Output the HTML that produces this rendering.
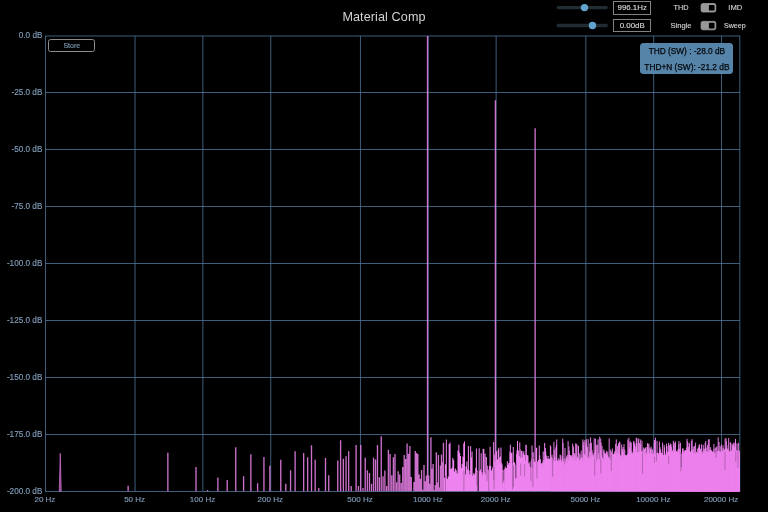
<!DOCTYPE html>
<html><head><meta charset="utf-8"><title>Material Comp</title>
<style>
html,body{margin:0;padding:0;background:#000;}
body{width:768px;height:512px;position:relative;overflow:hidden;font-family:"Liberation Sans",sans-serif;color:#c8c8c8;}
svg{position:absolute;left:0;top:0;}
.title{position:absolute;left:284px;width:200px;top:9px;text-align:center;font-size:12.6px;letter-spacing:0.1px;color:#d2d2d2;line-height:16px;}
.xl{position:absolute;width:60px;text-align:center;top:494px;font-size:8px;line-height:11px;color:#809cb9;white-space:nowrap;-webkit-text-stroke:0.15px #809cb9;}
.yl{position:absolute;left:0;width:42.4px;text-align:right;font-size:8.2px;line-height:11px;color:#809cb9;white-space:nowrap;-webkit-text-stroke:0.15px #809cb9;}
.store{position:absolute;left:48.3px;top:38.8px;width:45px;height:11px;border:1px solid #8c8c8c;border-radius:2.5px;box-sizing:content-box;font-size:7px;line-height:12px;text-align:center;color:#809cb9;-webkit-text-stroke:0.12px #809cb9;}
.tb{position:absolute;left:613px;width:36.4px;height:11.7px;border:1px solid #828282;font-size:7.9px;line-height:12.8px;text-align:center;color:#d6d6d6;-webkit-text-stroke:0.15px #d6d6d6;}
.lab{position:absolute;width:40px;text-align:center;font-size:7.6px;line-height:10px;color:#d0d0d0;-webkit-text-stroke:0.15px #d0d0d0;}
.info{position:absolute;left:640.3px;top:43.3px;width:93.2px;height:31px;border-radius:3.5px;background:rgba(90,136,175,0.96);color:#04070a;font-size:8.3px;text-align:center;-webkit-text-stroke:0.25px #04070a;}
.info div{position:absolute;left:0;width:100%;line-height:10px;white-space:nowrap;}
</style></head><body>
<svg width="768" height="512" viewBox="0 0 768 512">
<path d="M135.04 36V491.5M202.89 36V491.5M270.74 36V491.5M360.44 36V491.5M428.29 36V491.5M496.14 36V491.5M585.84 36V491.5M653.69 36V491.5M721.54 36V491.5M45.5 92.50H739.8M45.5 149.50H739.8M45.5 206.50H739.8M45.5 263.50H739.8M45.5 320.50H739.8M45.5 377.50H739.8M45.5 434.50H739.8M45 36H740.3M45 491.5H740.3M45.5 36V491.5M739.8 36V491.5" stroke="rgb(76,116,152)" stroke-opacity="0.8" stroke-width="1" fill="none"/>
<path d="M444.41 491.2V477.8M445.38 491.2V464.3M446.33 491.2V439.6M447.28 491.2V478.7M448.22 491.2V476.5M449.15 491.2V444.1M450.07 491.2V442.5M450.98 491.2V469.0M451.88 491.2V467.7M452.77 491.2V458.0M453.66 491.2V459.8M454.54 491.2V471.4M455.41 491.2V468.5M456.27 491.2V470.3M457.13 491.2V473.2M457.98 491.2V450.5M458.82 491.2V444.8M459.65 491.2V452.8M460.48 491.2V455.9M461.30 491.2V468.1M462.11 491.2V463.9M462.92 491.2V456.7M463.72 491.2V443.6M464.51 491.2V441.4M465.30 491.2V474.5M466.08 491.2V466.4M466.85 491.2V461.4M467.62 491.2V469.6M468.38 491.2V446.0M469.14 491.2V470.6M469.89 491.2V474.4M470.63 491.2V446.3M471.37 491.2V457.6M472.11 491.2V451.5M472.84 491.2V475.8M473.56 491.2V473.5M474.28 491.2V475.1M474.99 491.2V472.9M475.70 491.2V467.7M476.40 491.2V448.5M477.10 491.2V470.2M477.79 491.2V491.2M478.47 491.2V491.2M479.16 491.2V448.2M479.84 491.2V471.3M480.51 491.2V469.6M481.18 491.2V453.3M481.84 491.2V472.3M482.50 491.2V475.2M483.16 491.2V448.8M483.81 491.2V448.9M484.45 491.2V472.4M485.10 491.2V453.6M485.73 491.2V474.5M486.37 491.2V457.1M487.00 491.2V468.8M487.62 491.2V465.8M488.25 491.2V470.4M488.86 491.2V469.6M489.48 491.2V465.9M490.09 491.2V446.8M490.69 491.2V465.8M491.30 491.2V470.6M491.90 491.2V470.4M492.49 491.2V468.2M493.08 491.2V466.4M493.67 491.2V442.0M494.26 491.2V454.5M494.84 491.2V461.3M495.99 491.2V465.4M496.56 491.2V451.3M497.13 491.2V459.5M497.69 491.2V459.6M498.26 491.2V449.5M498.81 491.2V447.8M499.37 491.2V463.9M499.92 491.2V457.5M500.47 491.2V456.2M501.02 491.2V447.4M501.56 491.2V463.1M502.10 491.2V464.4M502.63 491.2V488.0M503.17 491.2V470.5M503.70 491.2V469.8M504.23 491.2V491.2M504.75 491.2V468.7M505.28 491.2V466.4M505.79 491.2V490.7M506.31 491.2V468.3M506.83 491.2V468.0M507.34 491.2V461.2M507.85 491.2V464.8M508.35 491.2V478.1M508.86 491.2V463.1M509.36 491.2V479.1M509.86 491.2V451.7M510.35 491.2V444.8M510.85 491.2V458.5M511.34 491.2V453.2M511.82 491.2V452.6M512.31 491.2V466.0M512.79 491.2V463.3M513.28 491.2V446.9M513.75 491.2V462.1M514.23 491.2V462.4M514.71 491.2V462.5M515.18 491.2V464.8M515.65 491.2V478.1M516.12 491.2V479.1M516.58 491.2V454.1M517.04 491.2V450.1M517.50 491.2V441.0M517.96 491.2V463.6M518.42 491.2V450.5M518.87 491.2V457.6M519.33 491.2V456.3M519.78 491.2V442.5M520.23 491.2V449.3M520.67 491.2V490.5M521.12 491.2V457.9M521.56 491.2V451.1M522.00 491.2V450.8M522.44 491.2V466.3M522.87 491.2V457.2M523.31 491.2V453.5M523.74 491.2V451.3M524.17 491.2V465.4M524.60 491.2V454.7M525.03 491.2V460.4M525.45 491.2V481.0M525.87 491.2V445.0M526.30 491.2V444.7M526.72 491.2V455.8M527.13 491.2V455.0M527.55 491.2V469.2M527.96 491.2V455.5M528.38 491.2V487.7M528.79 491.2V463.3M529.20 491.2V467.5M529.60 491.2V466.5M530.01 491.2V461.4M530.41 491.2V471.1M530.81 491.2V467.4M531.22 491.2V466.9M531.61 491.2V458.5M532.01 491.2V445.4M532.41 491.2V467.7M532.80 491.2V469.0M533.19 491.2V452.3M533.59 491.2V458.9M533.97 491.2V462.0M534.36 491.2V465.4M534.75 491.2V461.6M535.52 491.2V462.6M535.90 491.2V464.2M536.28 491.2V447.8M536.66 491.2V447.7M537.04 491.2V464.1M537.41 491.2V461.5M537.79 491.2V462.6M538.16 491.2V468.3M538.53 491.2V460.0M538.90 491.2V461.2M539.27 491.2V445.4M539.64 491.2V455.2M540.00 491.2V462.0M540.37 491.2V459.1M540.73 491.2V468.4M541.10 491.2V463.8M541.46 491.2V465.9M541.82 491.2V463.1M542.17 491.2V466.7M542.53 491.2V467.0M542.89 491.2V461.3M543.24 491.2V451.5M543.59 491.2V464.6M543.94 491.2V463.3M544.30 491.2V460.3M544.64 491.2V442.9M544.99 491.2V458.4M545.34 491.2V447.9M545.68 491.2V451.5M546.03 491.2V456.2M546.37 491.2V455.5M546.71 491.2V461.7M547.05 491.2V461.6M547.39 491.2V458.4M547.73 491.2V462.5M548.07 491.2V456.0M548.41 491.2V460.3M548.74 491.2V463.2M549.07 491.2V458.9M549.41 491.2V462.2M549.74 491.2V464.2M550.07 491.2V458.6M550.40 491.2V445.6M550.73 491.2V446.8" fill="none" stroke="#ee82ee" stroke-width="1.02"/>
<path d="M551.05 491.2V460.7M551.38 491.2V456.9M551.70 491.2V463.0M552.03 491.2V454.7M552.35 491.2V459.2M552.67 491.2V458.4M552.99 491.2V463.1M553.31 491.2V463.8M553.63 491.2V460.5M553.95 491.2V441.9M554.27 491.2V449.8M554.58 491.2V456.6M554.90 491.2V457.6M555.21 491.2V460.6M555.52 491.2V461.4M555.83 491.2V447.3M556.14 491.2V460.8M556.45 491.2V444.6M556.76 491.2V439.4M557.07 491.2V464.5M557.38 491.2V460.5M557.68 491.2V461.6M557.99 491.2V464.7M558.29 491.2V458.2M558.59 491.2V461.2M558.89 491.2V461.4M559.20 491.2V459.8M559.50 491.2V462.9M559.79 491.2V459.7M560.09 491.2V454.6M560.39 491.2V461.2M560.69 491.2V455.1M560.98 491.2V459.9M561.28 491.2V462.6M561.57 491.2V462.7M561.86 491.2V460.6M562.15 491.2V456.3M562.45 491.2V458.7M562.74 491.2V438.6M563.03 491.2V442.7M563.31 491.2V462.5M563.60 491.2V461.3M563.89 491.2V464.1M564.17 491.2V458.3M564.46 491.2V465.7M564.74 491.2V465.0M565.03 491.2V447.9M565.31 491.2V463.0M565.59 491.2V461.7M565.87 491.2V459.0M566.15 491.2V463.0M566.43 491.2V456.5M566.71 491.2V458.5M566.99 491.2V464.6M567.27 491.2V454.8M567.54 491.2V463.9M567.82 491.2V457.1M568.09 491.2V441.2M568.37 491.2V460.3M568.64 491.2V460.4M568.91 491.2V446.4M569.18 491.2V450.7M569.46 491.2V454.9M569.73 491.2V456.2M570.00 491.2V458.6M570.26 491.2V455.2M570.53 491.2V455.3M570.80 491.2V460.0M571.07 491.2V456.9M571.33 491.2V460.3M571.60 491.2V456.4M571.86 491.2V455.2M572.12 491.2V458.5M572.39 491.2V458.9M572.65 491.2V443.6M572.91 491.2V457.1M573.17 491.2V458.5M573.43 491.2V446.5M573.69 491.2V461.9M573.95 491.2V460.1M574.21 491.2V465.0M574.47 491.2V453.2M574.72 491.2V460.1M574.98 491.2V465.1M575.23 491.2V455.5M575.49 491.2V460.9M575.74 491.2V443.3M576.00 491.2V459.1M576.25 491.2V443.8M576.50 491.2V459.2M576.75 491.2V459.3M577.00 491.2V444.8M577.25 491.2V456.9M577.50 491.2V459.9M577.75 491.2V456.9M578.00 491.2V458.5M578.25 491.2V462.3M578.50 491.2V445.9M578.74 491.2V461.8M578.99 491.2V460.8M579.23 491.2V453.1M579.48 491.2V461.9M579.72 491.2V459.7M579.97 491.2V460.8M580.21 491.2V463.4M580.45 491.2V458.5M580.69 491.2V458.5M580.93 491.2V454.7M581.17 491.2V450.5M581.41 491.2V461.6M581.65 491.2V457.6M581.89 491.2V458.9M582.13 491.2V457.5M582.37 491.2V461.7M582.60 491.2V460.7M582.84 491.2V439.4M583.08 491.2V461.1M583.31 491.2V445.1M583.55 491.2V453.8M583.78 491.2V441.6M584.01 491.2V456.6M584.25 491.2V460.4M584.48 491.2V454.3M584.71 491.2V455.5M584.94 491.2V439.9M585.17 491.2V456.3M585.40 491.2V456.2M585.63 491.2V458.9M585.86 491.2V442.4M586.09 491.2V460.6M586.32 491.2V439.1M586.55 491.2V445.3M586.77 491.2V459.9M587.00 491.2V446.7M587.22 491.2V447.4M587.45 491.2V458.7M587.68 491.2V462.3M587.90 491.2V460.8M588.12 491.2V439.1M588.35 491.2V459.9M588.57 491.2V462.4M588.79 491.2V457.1M589.01 491.2V458.3M589.24 491.2V456.2M589.46 491.2V461.7M589.68 491.2V451.9M589.90 491.2V443.6M590.12 491.2V458.8M590.33 491.2V462.9M590.55 491.2V437.3M590.77 491.2V460.2M590.99 491.2V460.3M591.21 491.2V461.3M591.42 491.2V442.8M591.64 491.2V458.6M591.85 491.2V456.0M592.07 491.2V450.2M592.28 491.2V454.5M592.50 491.2V458.1M592.71 491.2V455.6M592.92 491.2V453.2M593.14 491.2V458.8M593.35 491.2V455.2M593.56 491.2V459.3M593.77 491.2V459.7M593.98 491.2V457.5M594.19 491.2V438.4M594.40 491.2V460.8M594.61 491.2V461.3M594.82 491.2V452.8M595.03 491.2V461.0M595.24 491.2V451.4M595.45 491.2V438.7M595.65 491.2V449.1M595.86 491.2V460.3M596.07 491.2V460.3M596.27 491.2V444.6M596.48 491.2V462.2M596.68 491.2V461.3M596.89 491.2V462.5M597.09 491.2V461.3M597.30 491.2V462.0M597.50 491.2V458.5M597.70 491.2V445.1M597.91 491.2V459.1M598.11 491.2V439.4M598.31 491.2V462.4M598.51 491.2V462.9M598.71 491.2V453.2M598.91 491.2V463.1M599.11 491.2V459.3M599.31 491.2V463.4M599.51 491.2V459.3M599.71 491.2V436.7M599.91 491.2V461.8M600.11 491.2V461.7M600.30 491.2V458.3M600.50 491.2V459.5M600.70 491.2V438.7M600.90 491.2V449.8M601.09 491.2V442.8M601.29 491.2V461.5M601.48 491.2V455.5M601.68 491.2V460.2M601.87 491.2V461.1M602.07 491.2V445.9M602.26 491.2V459.3M602.45 491.2V457.7M602.65 491.2V458.4M602.84 491.2V460.9M603.03 491.2V459.3M603.22 491.2V460.1M603.41 491.2V459.6M603.61 491.2V459.5M603.80 491.2V449.5M603.99 491.2V450.5M604.18 491.2V460.2M604.37 491.2V459.3M604.56 491.2V452.9M604.74 491.2V455.4M604.93 491.2V454.6M605.12 491.2V452.8M605.31 491.2V455.5M605.50 491.2V454.4M605.68 491.2V455.8M605.87 491.2V456.8M606.06 491.2V454.9M606.24 491.2V452.9M606.43 491.2V457.3M606.61 491.2V450.8M606.80 491.2V454.9M606.98 491.2V459.1M607.17 491.2V454.5M607.35 491.2V459.8M607.54 491.2V455.5M607.72 491.2V451.8M607.90 491.2V456.0M608.08 491.2V457.3M608.27 491.2V457.4M608.45 491.2V461.8M608.63 491.2V460.6M608.81 491.2V458.0M608.99 491.2V457.6M609.17 491.2V438.4M609.35 491.2V460.8M609.53 491.2V460.6M609.71 491.2V458.3M609.89 491.2V459.8M610.07 491.2V462.4M610.25 491.2V460.9M610.43 491.2V460.2M610.61 491.2V449.7M610.78 491.2V461.8M610.96 491.2V461.7M611.14 491.2V460.5M611.31 491.2V451.6M611.49 491.2V461.7M611.67 491.2V460.5M611.84 491.2V454.0M612.02 491.2V458.5M612.19 491.2V460.6M612.37 491.2V448.5M612.54 491.2V457.3M612.72 491.2V454.6M612.89 491.2V454.7M613.06 491.2V458.2M613.24 491.2V453.7M613.41 491.2V455.7M613.58 491.2V455.5M613.75 491.2V457.1M613.93 491.2V455.0M614.10 491.2V454.1M614.27 491.2V455.1M614.44 491.2V453.9M614.61 491.2V455.1M614.78 491.2V452.3M614.95 491.2V450.8M615.12 491.2V455.5M615.29 491.2V453.1M615.46 491.2V456.6M615.63 491.2V443.8M615.80 491.2V453.9M615.97 491.2V457.4M616.14 491.2V457.0M616.30 491.2V439.4M616.47 491.2V458.3M616.64 491.2V456.5M616.81 491.2V449.4M616.97 491.2V456.0M617.14 491.2V455.5M617.30 491.2V455.4M617.47 491.2V455.1M617.64 491.2V445.9M617.80 491.2V452.7M617.97 491.2V457.3M618.13 491.2V455.9M618.30 491.2V458.4M618.46 491.2V443.3M618.62 491.2V454.8M618.79 491.2V457.2M618.95 491.2V454.1M619.11 491.2V455.4M619.28 491.2V453.9M619.44 491.2V456.0M619.60 491.2V441.6M619.76 491.2V442.1M619.93 491.2V458.0M620.09 491.2V458.8M620.25 491.2V456.0M620.41 491.2V457.8M620.57 491.2V457.4M620.73 491.2V458.1M620.89 491.2V454.6M621.05 491.2V455.8M621.21 491.2V456.3M621.37 491.2V458.1M621.53 491.2V459.9M621.69 491.2V444.5M621.85 491.2V458.9M622.00 491.2V457.4M622.16 491.2V460.2M622.32 491.2V449.1M622.48 491.2V449.5M622.64 491.2V456.9M622.79 491.2V457.7M622.95 491.2V459.6M623.11 491.2V447.0M623.26 491.2V459.3M623.42 491.2V457.3M623.57 491.2V458.7M623.73 491.2V451.9M623.89 491.2V459.0M624.04 491.2V444.2M624.20 491.2V456.2M624.35 491.2V459.7M624.50 491.2V458.8M624.66 491.2V456.4M624.81 491.2V449.5M624.97 491.2V455.1M625.12 491.2V459.3M625.27 491.2V455.1M625.43 491.2V454.9M625.58 491.2V458.0M625.73 491.2V458.9M625.88 491.2V458.0M626.04 491.2V458.1M626.19 491.2V458.0M626.34 491.2V456.1M626.49 491.2V457.3M626.64 491.2V455.5M626.79 491.2V455.0M626.94 491.2V458.4M627.09 491.2V459.3M627.24 491.2V458.1M627.39 491.2V454.0M627.54 491.2V457.7M627.69 491.2V460.4M627.84 491.2V439.5M627.99 491.2V458.9M628.14 491.2V458.4M628.29 491.2V454.0M628.44 491.2V461.3M628.58 491.2V458.6M628.73 491.2V450.4M628.88 491.2V437.8M629.03 491.2V442.6M629.17 491.2V457.5M629.32 491.2V448.9M629.47 491.2V457.6M629.61 491.2V447.4M629.76 491.2V459.8M629.91 491.2V449.9M630.05 491.2V460.2M630.20 491.2V441.1M630.34 491.2V454.7M630.49 491.2V454.7M630.63 491.2V457.5M630.78 491.2V442.3M630.92 491.2V451.0M631.07 491.2V456.1M631.21 491.2V442.8M631.36 491.2V455.3M631.50 491.2V453.8M631.64 491.2V456.5M631.79 491.2V454.6M631.93 491.2V452.0M632.07 491.2V455.2M632.21 491.2V453.4M632.36 491.2V456.6M632.50 491.2V454.8M632.64 491.2V453.9M632.78 491.2V453.7M632.92 491.2V454.8M633.07 491.2V455.9M633.21 491.2V451.9M633.35 491.2V449.2M633.49 491.2V456.3M633.63 491.2V441.6M633.77 491.2V454.8M633.91 491.2V441.2M634.05 491.2V456.5M634.19 491.2V452.4M634.33 491.2V455.9M634.47 491.2V443.6M634.61 491.2V446.5M634.75 491.2V453.0M634.89 491.2V443.6M635.03 491.2V452.4M635.16 491.2V455.8M635.30 491.2V447.0M635.44 491.2V454.7M635.58 491.2V455.0M635.72 491.2V451.6M635.85 491.2V453.9M635.99 491.2V454.2M636.13 491.2V452.9M636.26 491.2V437.6M636.40 491.2V446.3M636.54 491.2V447.0M636.67 491.2V452.4M636.81 491.2V437.9M636.95 491.2V455.1M637.08 491.2V443.3M637.22 491.2V456.1M637.35 491.2V457.1M637.49 491.2V452.2M637.62 491.2V452.1M637.76 491.2V456.6M637.89 491.2V456.9M638.03 491.2V452.5M638.16 491.2V454.2M638.30 491.2V438.8M638.43 491.2V455.4M638.56 491.2V455.5M638.70 491.2V454.4M638.83 491.2V438.6M638.96 491.2V452.1M639.10 491.2V456.7M639.23 491.2V456.3M639.36 491.2V443.1M639.49 491.2V457.1M639.63 491.2V451.8M639.76 491.2V455.5M639.89 491.2V455.0M640.02 491.2V452.6M640.15 491.2V453.3M640.29 491.2V448.7M640.42 491.2V451.7M640.55 491.2V444.5M640.68 491.2V439.5M640.81 491.2V456.2M640.94 491.2V452.6M641.07 491.2V452.3M641.20 491.2V456.0M641.33 491.2V454.0M641.46 491.2V455.9M641.59 491.2V454.9M641.72 491.2V451.0M641.85 491.2V454.4M641.98 491.2V440.7M642.11 491.2V452.4M642.24 491.2V455.8M642.36 491.2V452.5M642.49 491.2V453.4M642.62 491.2V452.6M642.75 491.2V452.6M642.88 491.2V455.9M643.00 491.2V449.7M643.13 491.2V454.3M643.26 491.2V458.7M643.39 491.2V458.7M643.51 491.2V453.3M643.64 491.2V447.4M643.77 491.2V455.4M643.89 491.2V457.5M644.02 491.2V456.1M644.15 491.2V457.4M644.27 491.2V461.3M644.40 491.2V452.3M644.53 491.2V448.7M644.65 491.2V457.2M644.78 491.2V459.8M644.90 491.2V458.4M645.03 491.2V460.9M645.15 491.2V460.2M645.28 491.2V457.2M645.40 491.2V460.8M645.53 491.2V447.8M645.65 491.2V461.4M645.77 491.2V457.1M645.90 491.2V459.4M646.02 491.2V458.3M646.15 491.2V447.0M646.27 491.2V454.8M646.39 491.2V452.9M646.52 491.2V457.3M646.64 491.2V460.7M646.76 491.2V458.2M646.89 491.2V458.5M647.01 491.2V456.8M647.13 491.2V461.3M647.25 491.2V459.0M647.38 491.2V459.1M647.50 491.2V443.1M647.62 491.2V456.2M647.74 491.2V456.4M647.86 491.2V449.1M647.98 491.2V450.7M648.11 491.2V459.1M648.23 491.2V444.5M648.35 491.2V454.7M648.47 491.2V456.0M648.59 491.2V451.9M648.71 491.2V458.2M648.83 491.2V448.9M648.95 491.2V443.5M649.07 491.2V455.0M649.19 491.2V455.2M649.31 491.2V457.0M649.43 491.2V453.8M649.55 491.2V453.5M649.67 491.2V456.6M649.79 491.2V456.1M649.91 491.2V455.7M650.03 491.2V447.6M650.15 491.2V452.7M650.26 491.2V454.7M650.38 491.2V454.2M650.50 491.2V449.0M650.62 491.2V451.5M650.74 491.2V456.6M650.85 491.2V456.1M650.97 491.2V456.7M651.09 491.2V446.6M651.21 491.2V453.9M651.33 491.2V457.4M651.44 491.2V454.2M651.56 491.2V455.3M651.68 491.2V454.7M651.79 491.2V456.7M651.91 491.2V448.6M652.03 491.2V455.0M652.14 491.2V456.5M652.26 491.2V453.7M652.38 491.2V456.0M652.49 491.2V455.2M652.61 491.2V449.8M652.72 491.2V456.8M652.84 491.2V455.0M652.95 491.2V456.2M653.07 491.2V456.9M653.18 491.2V455.4M653.30 491.2V454.9M653.41 491.2V455.6M653.53 491.2V453.7M653.64 491.2V457.8M653.76 491.2V456.2M653.87 491.2V454.8M653.99 491.2V454.8M654.10 491.2V454.0M654.21 491.2V442.5M654.33 491.2V450.9M654.44 491.2V453.5M654.56 491.2V440.0M654.67 491.2V451.2M654.78 491.2V455.9M654.90 491.2V456.9M655.01 491.2V456.4M655.12 491.2V456.5M655.23 491.2V456.6M655.35 491.2V457.3M655.46 491.2V437.7M655.57 491.2V455.2M655.68 491.2V455.5M655.80 491.2V456.6M655.91 491.2V455.7M656.02 491.2V454.9M656.13 491.2V456.3M656.24 491.2V454.6M656.36 491.2V454.6M656.47 491.2V456.6M656.58 491.2V455.1M656.69 491.2V453.5M656.80 491.2V453.3M656.91 491.2V455.5M657.02 491.2V440.8M657.13 491.2V456.8M657.24 491.2V453.6M657.35 491.2V457.1M657.46 491.2V452.6M657.57 491.2V457.2M657.68 491.2V455.3M657.79 491.2V455.2M657.90 491.2V456.0M658.01 491.2V454.4M658.12 491.2V454.3M658.23 491.2V456.0M658.34 491.2V453.1M658.45 491.2V454.6M658.56 491.2V455.5M658.67 491.2V457.4M658.78 491.2V454.8M658.89 491.2V457.6M658.99 491.2V455.3M659.10 491.2V453.5M659.21 491.2V457.5M659.32 491.2V455.2M659.43 491.2V441.6M659.54 491.2V457.6M659.64 491.2V454.8M659.75 491.2V451.5M659.86 491.2V453.6M659.97 491.2V447.2M660.07 491.2V457.7M660.18 491.2V452.9M660.29 491.2V456.6M660.39 491.2V456.2M660.50 491.2V451.4M660.61 491.2V456.1M660.71 491.2V449.3M660.82 491.2V456.0M660.93 491.2V457.9M661.03 491.2V455.0M661.14 491.2V452.7M661.25 491.2V453.0M661.35 491.2V457.3M661.46 491.2V457.4M661.56 491.2V453.4M661.67 491.2V457.1M661.77 491.2V454.5M661.88 491.2V454.3M661.99 491.2V456.8M662.09 491.2V456.2M662.20 491.2V454.4M662.30 491.2V457.1M662.41 491.2V456.5M662.51 491.2V455.6M662.61 491.2V442.5M662.72 491.2V458.9M662.82 491.2V456.0M662.93 491.2V459.3M663.03 491.2V459.2M663.14 491.2V456.4M663.24 491.2V455.6M663.34 491.2V458.8M663.45 491.2V458.4M663.55 491.2V455.3M663.65 491.2V455.3M663.76 491.2V455.8M663.86 491.2V454.9M663.96 491.2V456.2M664.07 491.2V454.6M664.17 491.2V444.9M664.27 491.2V455.2M664.38 491.2V455.4M664.48 491.2V448.1M664.58 491.2V447.3M664.68 491.2V458.3M664.79 491.2V451.4M664.89 491.2V454.9M664.99 491.2V457.7M665.09 491.2V458.8M665.19 491.2V458.8M665.30 491.2V455.2M665.40 491.2V454.7M665.50 491.2V455.3M665.60 491.2V456.9M665.70 491.2V455.2M665.80 491.2V455.0M665.90 491.2V454.5M666.01 491.2V456.6M666.11 491.2V457.7M666.21 491.2V457.1M666.31 491.2V455.2M666.41 491.2V454.1M666.51 491.2V443.7M666.61 491.2V454.0M666.71 491.2V455.2M666.81 491.2V454.8M666.91 491.2V451.9M667.01 491.2V446.1M667.11 491.2V457.6M667.21 491.2V457.4M667.31 491.2V453.5M667.41 491.2V452.9M667.51 491.2V456.0M667.61 491.2V454.7M667.71 491.2V456.1M667.81 491.2V456.8M667.91 491.2V455.6M668.00 491.2V452.3M668.10 491.2V456.0M668.20 491.2V452.4M668.30 491.2V453.9M668.40 491.2V452.6M668.50 491.2V455.6M668.60 491.2V442.8M668.69 491.2V453.6M668.79 491.2V455.7M668.89 491.2V452.2M668.99 491.2V456.0M669.09 491.2V452.3M669.18 491.2V455.1M669.28 491.2V451.2M669.38 491.2V453.0M669.48 491.2V455.6M669.57 491.2V445.3M669.67 491.2V455.9M669.77 491.2V452.1M669.87 491.2V453.7M669.96 491.2V455.0M670.06 491.2V455.6M670.16 491.2V453.7M670.25 491.2V444.8M670.35 491.2V456.0M670.45 491.2V443.5M670.54 491.2V455.3M670.64 491.2V454.0M670.74 491.2V454.4M670.83 491.2V452.5M670.93 491.2V449.5M671.02 491.2V452.8M671.12 491.2V444.5M671.22 491.2V452.5M671.31 491.2V453.5M671.41 491.2V453.1M671.50 491.2V455.8M671.60 491.2V447.1M671.69 491.2V454.2M671.79 491.2V452.3M671.88 491.2V454.5M671.98 491.2V455.4M672.07 491.2V452.2M672.17 491.2V453.5M672.26 491.2V452.0M672.36 491.2V452.7M672.45 491.2V454.0M672.55 491.2V450.4M672.64 491.2V452.7M672.74 491.2V451.9M672.83 491.2V452.3M672.92 491.2V456.9M673.02 491.2V452.5M673.11 491.2V454.2M673.21 491.2V454.7M673.30 491.2V440.7M673.39 491.2V456.7M673.49 491.2V453.3M673.58 491.2V452.7M673.67 491.2V443.9M673.77 491.2V452.9M673.86 491.2V456.1M673.95 491.2V452.7M674.05 491.2V455.9M674.14 491.2V453.4M674.23 491.2V442.6M674.33 491.2V454.3M674.42 491.2V455.7M674.51 491.2V451.7M674.60 491.2V454.5M674.70 491.2V454.8M674.79 491.2V456.0M674.88 491.2V453.7M674.97 491.2V449.9M675.07 491.2V444.7M675.16 491.2V455.8M675.25 491.2V450.9M675.34 491.2V454.4M675.43 491.2V441.4M675.52 491.2V452.9M675.62 491.2V454.0M675.71 491.2V452.8M675.80 491.2V452.8M675.89 491.2V454.7M675.98 491.2V451.4M676.07 491.2V452.8M676.16 491.2V452.4M676.26 491.2V451.1M676.35 491.2V453.0M676.44 491.2V455.3M676.53 491.2V455.7M676.62 491.2V454.1M676.71 491.2V451.4M676.80 491.2V454.2M676.89 491.2V454.2M676.98 491.2V453.8M677.07 491.2V453.1M677.16 491.2V456.1M677.25 491.2V451.4M677.34 491.2V452.4M677.43 491.2V454.0M677.52 491.2V454.3M677.61 491.2V455.2M677.70 491.2V453.1M677.79 491.2V457.1M677.88 491.2V453.3M677.97 491.2V454.1M678.06 491.2V449.2M678.15 491.2V455.8M678.24 491.2V456.0M678.32 491.2V449.7M678.41 491.2V451.0M678.50 491.2V457.6M678.59 491.2V456.8M678.68 491.2V453.8M678.77 491.2V456.9M678.86 491.2V444.2M678.95 491.2V441.1M679.03 491.2V454.0M679.12 491.2V453.6M679.21 491.2V455.2M679.30 491.2V448.7M679.39 491.2V457.0M679.48 491.2V457.9M679.56 491.2V457.9M679.65 491.2V458.2M679.74 491.2V454.5M679.83 491.2V455.4M679.91 491.2V457.1M680.00 491.2V454.4M680.09 491.2V457.5M680.18 491.2V457.5M680.26 491.2V449.1M680.35 491.2V458.0M680.44 491.2V442.7M680.53 491.2V455.0M680.61 491.2V458.2M680.70 491.2V454.7M680.79 491.2V454.0M680.87 491.2V456.9M680.96 491.2V457.6M681.05 491.2V454.9M681.13 491.2V456.9M681.22 491.2V458.2M681.31 491.2V454.2M681.39 491.2V454.9M681.48 491.2V458.5M681.57 491.2V454.2M681.65 491.2V458.1M681.74 491.2V455.9M681.82 491.2V454.6M681.91 491.2V455.7M682.00 491.2V456.7M682.08 491.2V452.1M682.17 491.2V456.4M682.25 491.2V453.0M682.34 491.2V456.1M682.42 491.2V454.9M682.51 491.2V448.6M682.59 491.2V450.2M682.68 491.2V452.5M682.76 491.2V454.1M682.85 491.2V453.9M682.93 491.2V455.1M683.02 491.2V457.4M683.10 491.2V448.2M683.19 491.2V456.1M683.27 491.2V455.3M683.36 491.2V453.5M683.44 491.2V456.4M683.53 491.2V455.4M683.61 491.2V455.8M683.70 491.2V454.5M683.78 491.2V453.7M683.86 491.2V453.9M683.95 491.2V450.4M684.03 491.2V454.3M684.12 491.2V453.0M684.20 491.2V453.5M684.28 491.2V451.7M684.37 491.2V453.9M684.45 491.2V453.1M684.54 491.2V451.8M684.62 491.2V453.0M684.70 491.2V454.1M684.79 491.2V453.0M684.87 491.2V454.1M684.95 491.2V450.6M685.04 491.2V452.8M685.12 491.2V453.0M685.20 491.2V451.1M685.28 491.2V455.2M685.37 491.2V451.9M685.45 491.2V450.1M685.53 491.2V451.5M685.62 491.2V451.3M685.70 491.2V454.6M685.78 491.2V451.2M685.86 491.2V454.9M685.95 491.2V450.4M686.03 491.2V454.4M686.11 491.2V450.6M686.19 491.2V452.6M686.28 491.2V453.1M686.36 491.2V450.9M686.44 491.2V453.6M686.52 491.2V451.9M686.60 491.2V451.6M686.68 491.2V447.7M686.77 491.2V451.6M686.85 491.2V452.9M686.93 491.2V452.2M687.01 491.2V438.9M687.09 491.2V450.2M687.17 491.2V453.6M687.26 491.2V450.5M687.34 491.2V449.8M687.42 491.2V441.5M687.50 491.2V453.0M687.58 491.2V453.4M687.66 491.2V451.8M687.74 491.2V451.4M687.82 491.2V454.0M687.90 491.2V451.8M687.98 491.2V455.1M688.07 491.2V451.6M688.15 491.2V455.0M688.23 491.2V450.3M688.31 491.2V454.2M688.39 491.2V455.3M688.47 491.2V454.1M688.55 491.2V450.4M688.63 491.2V447.1M688.71 491.2V455.1M688.79 491.2V451.1M688.87 491.2V454.1M688.95 491.2V451.2M689.03 491.2V442.6M689.11 491.2V452.9M689.19 491.2V452.1M689.27 491.2V452.7M689.35 491.2V455.0M689.43 491.2V443.6M689.51 491.2V452.5M689.58 491.2V450.8M689.66 491.2V452.6M689.74 491.2V455.3M689.82 491.2V451.8M689.90 491.2V452.0M689.98 491.2V451.9M690.06 491.2V454.6M690.14 491.2V452.4M690.22 491.2V452.0M690.30 491.2V451.8M690.38 491.2V455.4M690.45 491.2V454.8M690.53 491.2V452.5M690.61 491.2V453.6M690.69 491.2V452.0M690.77 491.2V454.3M690.85 491.2V454.2M690.93 491.2V452.4M691.00 491.2V453.2M691.08 491.2V455.7M691.16 491.2V455.8M691.24 491.2V453.0M691.32 491.2V451.4M691.39 491.2V440.9M691.47 491.2V452.0M691.55 491.2V455.0M691.63 491.2V450.1M691.71 491.2V456.0M691.78 491.2V451.7M691.86 491.2V455.5M691.94 491.2V451.8M692.02 491.2V452.8M692.09 491.2V452.2M692.17 491.2V439.2M692.25 491.2V452.3M692.32 491.2V452.5M692.40 491.2V452.7M692.48 491.2V452.6M692.56 491.2V454.5M692.63 491.2V450.4M692.71 491.2V453.8M692.79 491.2V457.0M692.86 491.2V455.9M692.94 491.2V453.1M693.02 491.2V452.7M693.09 491.2V449.1M693.17 491.2V454.3M693.25 491.2V446.5M693.32 491.2V455.3M693.40 491.2V457.5M693.48 491.2V456.2M693.55 491.2V454.3M693.63 491.2V457.6M693.70 491.2V454.7M693.78 491.2V453.5M693.86 491.2V452.9M693.93 491.2V457.5M694.01 491.2V455.9M694.08 491.2V454.1M694.16 491.2V453.5M694.24 491.2V456.8M694.31 491.2V453.2M694.39 491.2V454.5M694.46 491.2V455.7M694.54 491.2V457.8M694.61 491.2V445.9M694.69 491.2V456.0M694.76 491.2V454.2M694.84 491.2V456.8M694.91 491.2V456.7M694.99 491.2V455.8M695.06 491.2V456.6M695.14 491.2V456.4M695.21 491.2V454.4M695.29 491.2V454.6M695.36 491.2V455.7M695.44 491.2V456.0M695.51 491.2V454.5M695.59 491.2V442.6M695.66 491.2V456.2M695.74 491.2V454.8M695.81 491.2V457.7M695.89 491.2V456.9M695.96 491.2V458.2M696.04 491.2V454.0M696.11 491.2V457.9M696.18 491.2V454.4M696.26 491.2V455.1M696.33 491.2V452.3M696.41 491.2V456.2M696.48 491.2V451.9M696.55 491.2V456.2M696.63 491.2V457.9M696.70 491.2V454.7M696.78 491.2V455.8M696.85 491.2V455.1M696.92 491.2V455.6M697.00 491.2V454.0M697.07 491.2V456.7M697.14 491.2V453.4M697.22 491.2V455.4M697.29 491.2V457.9M697.36 491.2V448.5M697.44 491.2V455.6M697.51 491.2V456.5M697.58 491.2V453.6M697.66 491.2V455.1M697.73 491.2V454.6M697.80 491.2V456.3M697.88 491.2V454.7M697.95 491.2V455.7M698.02 491.2V453.7M698.09 491.2V456.2M698.17 491.2V455.8M698.24 491.2V452.7M698.31 491.2V454.2M698.39 491.2V454.7M698.46 491.2V455.9M698.53 491.2V447.6M698.60 491.2V456.1M698.68 491.2V454.1M698.75 491.2V453.9M698.82 491.2V454.2M698.89 491.2V454.9M698.96 491.2V453.5M699.04 491.2V445.6M699.11 491.2V455.2M699.18 491.2V450.7M699.25 491.2V451.8M699.32 491.2V444.2M699.40 491.2V445.5M699.47 491.2V451.5M699.54 491.2V453.4M699.61 491.2V456.3M699.68 491.2V455.7M699.75 491.2V453.1M699.83 491.2V451.5M699.90 491.2V452.9M699.97 491.2V453.1M700.04 491.2V455.9M700.11 491.2V454.3M700.18 491.2V452.1M700.25 491.2V456.2M700.33 491.2V456.3M700.40 491.2V453.1M700.47 491.2V448.6M700.54 491.2V454.8M700.61 491.2V454.2M700.68 491.2V453.5M700.75 491.2V455.4M700.82 491.2V451.5M700.89 491.2V455.7M700.96 491.2V454.3M701.03 491.2V454.5M701.10 491.2V457.2M701.18 491.2V455.5M701.25 491.2V455.6M701.32 491.2V453.7M701.39 491.2V456.7M701.46 491.2V444.3M701.53 491.2V454.5M701.60 491.2V456.5M701.67 491.2V456.2M701.74 491.2V457.2M701.81 491.2V454.9M701.88 491.2V454.6M701.95 491.2V454.9M702.02 491.2V453.7M702.09 491.2V455.9M702.16 491.2V455.1M702.23 491.2V457.2M702.30 491.2V454.1M702.37 491.2V454.0M702.44 491.2V455.2M702.51 491.2V456.6M702.58 491.2V456.5M702.65 491.2V458.2M702.71 491.2V457.8M702.78 491.2V457.6M702.85 491.2V455.5M702.92 491.2V451.7M702.99 491.2V456.2M703.06 491.2V450.7M703.13 491.2V456.7M703.20 491.2V444.8M703.27 491.2V458.2M703.34 491.2V455.8M703.41 491.2V454.9M703.48 491.2V455.6M703.54 491.2V453.5M703.61 491.2V457.3M703.68 491.2V455.7M703.75 491.2V452.7M703.82 491.2V457.1M703.89 491.2V457.5M703.96 491.2V448.4M704.02 491.2V457.5M704.09 491.2V453.0M704.16 491.2V455.0M704.23 491.2V456.4M704.30 491.2V456.6M704.37 491.2V453.0M704.44 491.2V453.1M704.50 491.2V456.6M704.57 491.2V454.9M704.64 491.2V449.3M704.71 491.2V453.3M704.78 491.2V454.4M704.84 491.2V455.9M704.91 491.2V453.4M704.98 491.2V454.2M705.05 491.2V456.9M705.11 491.2V453.2M705.18 491.2V442.9M705.25 491.2V455.1M705.32 491.2V449.7M705.39 491.2V454.9M705.45 491.2V453.3M705.52 491.2V453.2M705.59 491.2V451.5M705.66 491.2V456.6M705.72 491.2V441.1M705.79 491.2V454.9M705.86 491.2V453.1M705.92 491.2V452.7M705.99 491.2V452.0M706.06 491.2V454.4M706.13 491.2V456.2M706.19 491.2V447.6M706.26 491.2V455.6M706.33 491.2V452.0M706.39 491.2V454.6M706.46 491.2V451.8M706.53 491.2V455.0M706.59 491.2V453.2M706.66 491.2V453.8M706.73 491.2V451.5M706.79 491.2V453.4M706.86 491.2V451.8M706.93 491.2V455.0M706.99 491.2V452.1M707.06 491.2V452.0M707.13 491.2V452.4M707.19 491.2V456.2M707.26 491.2V455.2M707.33 491.2V453.8M707.39 491.2V455.8M707.46 491.2V454.5M707.52 491.2V454.4M707.59 491.2V455.2M707.66 491.2V444.9M707.72 491.2V456.1M707.79 491.2V454.9M707.85 491.2V455.4M707.92 491.2V455.7M707.99 491.2V455.3M708.05 491.2V454.1M708.12 491.2V455.3M708.18 491.2V455.5M708.25 491.2V455.9M708.31 491.2V455.8M708.38 491.2V439.6M708.44 491.2V455.3M708.51 491.2V452.0M708.58 491.2V452.2M708.64 491.2V455.6M708.71 491.2V454.6M708.77 491.2V454.9M708.84 491.2V454.4M708.90 491.2V455.1M708.97 491.2V451.4M709.03 491.2V455.1M709.10 491.2V453.9M709.16 491.2V454.9M709.23 491.2V439.1M709.29 491.2V453.0M709.36 491.2V453.1M709.42 491.2V451.9M709.49 491.2V455.1M709.55 491.2V452.3M709.62 491.2V449.9M709.68 491.2V454.1M709.75 491.2V451.4M709.81 491.2V451.0M709.87 491.2V451.7M709.94 491.2V455.6M710.00 491.2V451.9M710.07 491.2V453.9M710.13 491.2V452.8M710.20 491.2V455.6M710.26 491.2V455.8M710.33 491.2V455.0M710.39 491.2V453.5M710.45 491.2V450.5M710.52 491.2V455.0M710.58 491.2V452.7M710.65 491.2V447.2M710.71 491.2V452.9M710.77 491.2V455.5M710.84 491.2V451.4M710.90 491.2V453.3M710.97 491.2V452.9M711.03 491.2V454.3M711.09 491.2V453.8M711.16 491.2V455.7M711.22 491.2V453.0M711.28 491.2V451.5M711.35 491.2V454.7M711.41 491.2V453.5M711.47 491.2V455.8M711.54 491.2V455.1M711.60 491.2V450.1M711.67 491.2V455.8M711.73 491.2V454.3M711.79 491.2V451.7M711.85 491.2V455.2M711.92 491.2V452.9M711.98 491.2V452.9M712.04 491.2V453.6M712.11 491.2V454.7M712.17 491.2V454.9M712.23 491.2V456.3M712.30 491.2V455.0M712.36 491.2V452.3M712.42 491.2V455.6M712.49 491.2V453.2M712.55 491.2V454.1M712.61 491.2V452.3M712.67 491.2V452.4M712.74 491.2V451.8M712.80 491.2V453.5M712.86 491.2V456.4M712.92 491.2V453.2M712.99 491.2V452.6M713.05 491.2V453.9M713.11 491.2V450.9M713.17 491.2V456.6M713.24 491.2V452.8M713.30 491.2V454.1M713.36 491.2V455.1M713.42 491.2V453.5M713.49 491.2V455.8M713.55 491.2V454.8M713.61 491.2V455.8M713.67 491.2V453.9M713.73 491.2V454.8M713.80 491.2V455.3M713.86 491.2V456.1M713.92 491.2V444.0M713.98 491.2V457.0M714.04 491.2V453.6M714.11 491.2V448.8M714.17 491.2V454.5M714.23 491.2V453.0M714.29 491.2V455.7M714.35 491.2V455.7M714.41 491.2V456.5M714.48 491.2V457.3M714.54 491.2V454.4M714.60 491.2V456.7M714.66 491.2V453.6M714.72 491.2V455.4M714.78 491.2V456.1M714.84 491.2V453.4M714.91 491.2V453.1M714.97 491.2V455.2M715.03 491.2V456.1M715.09 491.2V454.7M715.15 491.2V454.1M715.21 491.2V456.6M715.27 491.2V453.4M715.33 491.2V456.4M715.39 491.2V457.1M715.46 491.2V456.3M715.52 491.2V455.8M715.58 491.2V453.1M715.64 491.2V456.0M715.70 491.2V453.8M715.76 491.2V447.9M715.82 491.2V453.3M715.88 491.2V452.7M715.94 491.2V457.0M716.00 491.2V453.9M716.06 491.2V452.4M716.12 491.2V453.6M716.18 491.2V447.1M716.24 491.2V452.1M716.31 491.2V454.6M716.37 491.2V451.9M716.43 491.2V452.2M716.49 491.2V454.7M716.55 491.2V453.2M716.61 491.2V452.5M716.67 491.2V452.4M716.73 491.2V455.4M716.79 491.2V451.4M716.85 491.2V451.4M716.91 491.2V453.3M716.97 491.2V446.3M717.03 491.2V453.1M717.09 491.2V454.0M717.15 491.2V455.3M717.21 491.2V455.0M717.27 491.2V452.6M717.33 491.2V451.3M717.39 491.2V451.5M717.45 491.2V454.3M717.51 491.2V453.1M717.57 491.2V451.8M717.63 491.2V452.2M717.69 491.2V454.5M717.75 491.2V453.0M717.80 491.2V454.4M717.86 491.2V452.2M717.92 491.2V454.4M717.98 491.2V454.7M718.04 491.2V455.5M718.10 491.2V454.6M718.16 491.2V437.2M718.22 491.2V454.2M718.28 491.2V452.9M718.34 491.2V454.3M718.40 491.2V452.7M718.46 491.2V450.9M718.52 491.2V455.3M718.58 491.2V451.9M718.63 491.2V451.1M718.69 491.2V456.4M718.75 491.2V455.5M718.81 491.2V455.7M718.87 491.2V452.2M718.93 491.2V454.2M718.99 491.2V453.0M719.05 491.2V441.9M719.11 491.2V456.8M719.16 491.2V455.6M719.22 491.2V456.0M719.28 491.2V452.7M719.34 491.2V451.5M719.40 491.2V452.2M719.46 491.2V456.1M719.52 491.2V452.4M719.57 491.2V454.9M719.63 491.2V451.0M719.69 491.2V454.8M719.75 491.2V453.4M719.81 491.2V456.9M719.87 491.2V452.9M719.92 491.2V453.1M719.98 491.2V454.7M720.04 491.2V455.7M720.10 491.2V454.7M720.16 491.2V446.2M720.21 491.2V454.5M720.27 491.2V456.0M720.33 491.2V455.7M720.39 491.2V454.8M720.45 491.2V457.0M720.50 491.2V452.7M720.56 491.2V457.3M720.62 491.2V454.3M720.68 491.2V456.5M720.74 491.2V456.0M720.79 491.2V452.2M720.85 491.2V452.4M720.91 491.2V451.5M720.97 491.2V455.5M721.02 491.2V455.3M721.08 491.2V453.4M721.14 491.2V452.1M721.20 491.2V452.5M721.25 491.2V455.5M721.31 491.2V455.9M721.37 491.2V454.4M721.43 491.2V444.3M721.48 491.2V451.7M721.54 491.2V454.4M721.60 491.2V454.1M721.66 491.2V454.5M721.71 491.2V451.9M721.77 491.2V447.9M721.83 491.2V451.4M721.88 491.2V451.5M721.94 491.2V455.4M722.00 491.2V451.9M722.06 491.2V452.3M722.11 491.2V451.7M722.17 491.2V453.9M722.23 491.2V451.6M722.28 491.2V455.3M722.34 491.2V451.5M722.40 491.2V452.5M722.45 491.2V451.7M722.51 491.2V455.8M722.57 491.2V451.0M722.62 491.2V450.8M722.68 491.2V453.5M722.74 491.2V452.9M722.79 491.2V454.1M722.85 491.2V454.6M722.91 491.2V455.4M722.96 491.2V454.5M723.02 491.2V445.3M723.08 491.2V455.2M723.13 491.2V455.5M723.19 491.2V454.3M723.24 491.2V452.3M723.30 491.2V452.4M723.36 491.2V448.4M723.41 491.2V455.3M723.47 491.2V454.8M723.53 491.2V454.4M723.58 491.2V451.8M723.64 491.2V450.6M723.69 491.2V454.9M723.75 491.2V452.1M723.81 491.2V454.3M723.86 491.2V454.3M723.92 491.2V450.8M723.97 491.2V451.8M724.03 491.2V452.0M724.09 491.2V455.0M724.14 491.2V452.8M724.20 491.2V452.8M724.25 491.2V452.1M724.31 491.2V453.4M724.36 491.2V450.4M724.42 491.2V451.3M724.48 491.2V449.9M724.53 491.2V453.4M724.59 491.2V450.6M724.64 491.2V453.2M724.70 491.2V453.4M724.75 491.2V450.9M724.81 491.2V449.8M724.86 491.2V450.6M724.92 491.2V454.4M724.97 491.2V452.5M725.03 491.2V452.5M725.09 491.2V451.0M725.14 491.2V438.3M725.20 491.2V450.0M725.25 491.2V454.3M725.31 491.2V450.8M725.36 491.2V450.3M725.42 491.2V448.3M725.47 491.2V451.6M725.53 491.2V449.9M725.58 491.2V451.1M725.64 491.2V449.6M725.69 491.2V450.6M725.75 491.2V453.5M725.80 491.2V450.9M725.86 491.2V449.1M725.91 491.2V452.9M725.97 491.2V452.9M726.02 491.2V450.4M726.07 491.2V438.3M726.13 491.2V452.6M726.18 491.2V450.1M726.24 491.2V441.2M726.29 491.2V451.7M726.35 491.2V450.6M726.40 491.2V451.3M726.46 491.2V452.7M726.51 491.2V451.3M726.57 491.2V451.6M726.62 491.2V454.0M726.67 491.2V451.2M726.73 491.2V452.2M726.78 491.2V453.6M726.84 491.2V454.8M726.89 491.2V445.3M726.95 491.2V450.7M727.00 491.2V451.2M727.05 491.2V454.2M727.11 491.2V450.5M727.16 491.2V451.9M727.22 491.2V451.4M727.27 491.2V449.3M727.32 491.2V453.7M727.38 491.2V450.4M727.43 491.2V455.3M727.49 491.2V455.3M727.54 491.2V455.8M727.59 491.2V452.3M727.65 491.2V455.4M727.70 491.2V451.5M727.76 491.2V455.8M727.81 491.2V454.8M727.86 491.2V448.7M727.92 491.2V454.5M727.97 491.2V451.8M728.02 491.2V453.6M728.08 491.2V451.2M728.13 491.2V453.8M728.18 491.2V448.6M728.24 491.2V452.4M728.29 491.2V454.2M728.35 491.2V451.9M728.40 491.2V456.0M728.45 491.2V455.5M728.51 491.2V455.8M728.56 491.2V452.4M728.61 491.2V455.8M728.67 491.2V438.1M728.72 491.2V452.3M728.77 491.2V454.3M728.82 491.2V453.4M728.88 491.2V451.5M728.93 491.2V452.6M728.98 491.2V454.0M729.04 491.2V454.0M729.09 491.2V454.6M729.14 491.2V455.7M729.20 491.2V456.6M729.25 491.2V452.7M729.30 491.2V453.3M729.36 491.2V453.4M729.41 491.2V451.8M729.46 491.2V452.5M729.51 491.2V451.8M729.57 491.2V453.1M729.62 491.2V454.6M729.67 491.2V452.5M729.72 491.2V452.5M729.78 491.2V452.6M729.83 491.2V454.5M729.88 491.2V456.4M729.94 491.2V451.3M729.99 491.2V454.2M730.04 491.2V456.4M730.09 491.2V456.3M730.15 491.2V453.4M730.20 491.2V454.1M730.25 491.2V442.2M730.30 491.2V451.1M730.36 491.2V456.4M730.41 491.2V454.7M730.46 491.2V456.1M730.51 491.2V454.7M730.56 491.2V453.3M730.62 491.2V455.0M730.67 491.2V456.6M730.72 491.2V453.0M730.77 491.2V442.6M730.83 491.2V455.5M730.88 491.2V453.1M730.93 491.2V454.5M730.98 491.2V452.2M731.03 491.2V454.9M731.09 491.2V455.1M731.14 491.2V451.7M731.19 491.2V454.9M731.24 491.2V454.7M731.29 491.2V456.2M731.34 491.2V452.4M731.40 491.2V456.0M731.45 491.2V453.1M731.50 491.2V455.5M731.55 491.2V454.5M731.60 491.2V454.1M731.66 491.2V451.3M731.71 491.2V451.6M731.76 491.2V450.6M731.81 491.2V452.3M731.86 491.2V450.5M731.91 491.2V454.7M731.96 491.2V451.7M732.02 491.2V452.0M732.07 491.2V452.1M732.12 491.2V444.2M732.17 491.2V454.2M732.22 491.2V453.5M732.27 491.2V452.4M732.32 491.2V453.9M732.38 491.2V452.8M732.43 491.2V450.2M732.48 491.2V451.8M732.53 491.2V453.1M732.58 491.2V449.6M732.63 491.2V445.2M732.68 491.2V448.8M732.73 491.2V448.0M732.79 491.2V447.7M732.84 491.2V453.2M732.89 491.2V448.0M732.94 491.2V448.9M732.99 491.2V450.7M733.04 491.2V450.1M733.09 491.2V449.3M733.14 491.2V447.9M733.19 491.2V443.5M733.24 491.2V452.0M733.29 491.2V449.7M733.35 491.2V449.0M733.40 491.2V450.8M733.45 491.2V447.8M733.50 491.2V451.7M733.55 491.2V452.1M733.60 491.2V448.6M733.65 491.2V449.1M733.70 491.2V452.2M733.75 491.2V449.4M733.80 491.2V443.2M733.85 491.2V449.3M733.90 491.2V448.9M733.95 491.2V449.6M734.00 491.2V450.6M734.05 491.2V452.2M734.10 491.2V442.5M734.15 491.2V451.9M734.21 491.2V451.8M734.26 491.2V449.8M734.31 491.2V452.2M734.36 491.2V449.7M734.41 491.2V452.8M734.46 491.2V452.6M734.51 491.2V453.1M734.56 491.2V450.7M734.61 491.2V449.5M734.66 491.2V449.7M734.71 491.2V446.3M734.76 491.2V453.8M734.81 491.2V450.5M734.86 491.2V452.1M734.91 491.2V451.4M734.96 491.2V452.3M735.01 491.2V450.2M735.06 491.2V448.0M735.11 491.2V453.1M735.16 491.2V451.4M735.21 491.2V453.5M735.26 491.2V451.8M735.31 491.2V454.6M735.36 491.2V453.1M735.41 491.2V452.3M735.46 491.2V451.5M735.51 491.2V438.9M735.55 491.2V452.5M735.60 491.2V451.6M735.65 491.2V443.6M735.70 491.2V450.6M735.75 491.2V450.6M735.80 491.2V450.4M735.85 491.2V454.0M735.90 491.2V450.7M735.95 491.2V449.9M736.00 491.2V451.0M736.05 491.2V454.0M736.10 491.2V451.9M736.15 491.2V451.4M736.20 491.2V450.7M736.25 491.2V453.9M736.30 491.2V454.7M736.35 491.2V454.9M736.40 491.2V451.6M736.44 491.2V453.7M736.49 491.2V450.8M736.54 491.2V454.9M736.59 491.2V454.2M736.64 491.2V451.4M736.69 491.2V452.5M736.74 491.2V450.9M736.79 491.2V451.7M736.84 491.2V453.9M736.89 491.2V451.1M736.94 491.2V454.2M736.98 491.2V453.0M737.03 491.2V443.4M737.08 491.2V454.9M737.13 491.2V454.4M737.18 491.2V451.5M737.23 491.2V452.0M737.28 491.2V452.0M737.33 491.2V451.3M737.37 491.2V452.2M737.42 491.2V454.6M737.47 491.2V451.3M737.52 491.2V454.1M737.57 491.2V453.8M737.62 491.2V454.2M737.67 491.2V453.4M737.72 491.2V454.3M737.76 491.2V452.8M737.81 491.2V454.2M737.86 491.2V454.3M737.91 491.2V454.5M737.96 491.2V454.8M738.01 491.2V453.5M738.05 491.2V450.3M738.10 491.2V452.8M738.15 491.2V451.8M738.20 491.2V454.0M738.25 491.2V451.2M738.30 491.2V451.3M738.34 491.2V451.7M738.39 491.2V442.8M738.44 491.2V450.0M738.49 491.2V452.4M738.54 491.2V454.1M738.59 491.2V451.7M738.63 491.2V454.6M738.68 491.2V454.7M738.73 491.2V451.8M738.78 491.2V453.1M738.83 491.2V453.2M738.87 491.2V452.9M738.92 491.2V452.5M738.97 491.2V453.7M739.02 491.2V452.3M739.07 491.2V455.3M739.11 491.2V451.2M739.16 491.2V450.8M739.21 491.2V452.9" fill="none" stroke="#ee82ee" stroke-width="0.95"/>
<path d="M656.6 454.0V461.1M600.8 458.6V473.5M552.7 459.3V476.6M680.9 451.9V471.2M735.8 450.8V462.0M654.4 456.5V462.7M536.9 461.9V478.5M503.8 469.6V481.9M642.5 453.1V473.8M738.0 451.4V467.7M502.8 471.6V482.8M668.7 455.6V464.4M716.1 450.4V457.7M594.7 459.3V475.4M725.0 451.6V470.1M611.3 454.7V470.8M681.4 452.9V467.2M524.6 464.1V476.6M493.8 467.5V480.3M445.5 475.6V491.2M516.1 461.9V478.8M494.1 465.7V488.9M530.9 458.7V481.4M513.5 465.5V487.1M512.5 462.8V489.4M532.9 457.4V487.1M487.0 466.4V481.1M520.7 463.6V475.9M488.7 469.5V491.2M476.9 472.3V485.9M463.9 470.8V490.8M503.7 464.7V479.7" fill="none" stroke="#000" stroke-opacity="0.35" stroke-width="0.7"/>
<path d="M59.24 491.2 L60.24 453.3 L61.24 491.2Z" fill="#ee82ee" fill-opacity="0.55" stroke="#ee82ee" stroke-opacity="0.75" stroke-width="0.8" stroke-linejoin="round"/>
<path d="M128.13 491.2V485.8M167.85 491.2V452.8M196.03 491.2V467.0M207.57 491.2V490.0M217.89 491.2V477.5M227.22 491.2V480.0M235.75 491.2V447.2M243.59 491.2V476.3M250.85 491.2V454.2M257.61 491.2V483.3M263.93 491.2V457.0M269.87 491.2V465.8M280.76 491.2V459.8M285.79 491.2V483.8M290.57 491.2V470.2M295.12 491.2V451.2M303.65 491.2V453.1M307.64 491.2V457.2M311.49 491.2V445.2M315.18 491.2V459.8M318.75 491.2V488.1M325.50 491.2V458.1M328.72 491.2V475.2M337.76 491.2V460.4M340.60 491.2V440.2M343.36 491.2V458.8M346.05 491.2V456.2M348.66 491.2V451.2M351.20 491.2V486.0M356.10 491.2V445.0M358.46 491.2V486.0M360.77 491.2V445.0M363.02 491.2V488.1M365.22 491.2V457.8M367.37 491.2V470.2M369.48 491.2V473.1M371.54 491.2V483.8M373.56 491.2V457.8M375.54 491.2V459.4M377.48 491.2V445.0M379.38 491.2V477.2M381.25 491.2V436.2M383.08 491.2V476.2M384.88 491.2V470.6M386.64 491.2V486.0M388.38 491.2V449.8M390.08 491.2V454.0M391.75 491.2V475.2M393.40 491.2V457.2M395.02 491.2V454.0M396.61 491.2V482.2M398.18 491.2V471.2M399.72 491.2V474.4M401.24 491.2V483.1M402.74 491.2V466.9M404.21 491.2V455.0M405.66 491.2V459.0M407.09 491.2V443.5M408.50 491.2V453.8M409.89 491.2V446.0M411.26 491.2V476.9M413.94 491.2V481.9M415.26 491.2V451.0M416.56 491.2V453.1M417.84 491.2V454.0M419.10 491.2V474.4M420.35 491.2V478.8M421.58 491.2V470.0M422.80 491.2V489.8M424.00 491.2V465.0M425.19 491.2V481.2M426.36 491.2V475.6M427.52 491.2V36.0M428.66 491.2V475.6M429.80 491.2V483.8M430.92 491.2V437.2M432.02 491.2V468.8M433.12 491.2V464.0M434.20 491.2V490.0M435.27 491.2V485.0M436.33 491.2V452.2M437.38 491.2V482.5M438.41 491.2V455.0M439.44 491.2V487.5M440.46 491.2V465.6M441.46 491.2V454.4M442.45 491.2V461.9M443.44 491.2V442.8M495.42 491.2V100.2M535.13 491.2V128.2" stroke="#ee82ee" stroke-opacity="0.85" stroke-width="1.35" fill="none"/>
<!-- sliders -->
<g stroke-linecap="round" stroke="#222c33" stroke-width="3.4"><path d="M558.3 7.6H606.2"/><path d="M558.3 25.5H606.2"/></g>
<circle cx="584.5" cy="7.6" r="3.7" fill="#62a3cf"/>
<circle cx="592.5" cy="25.5" r="3.7" fill="#62a3cf"/>
<!-- toggles -->
<g fill="#989898" stroke="#a6a6a6" stroke-width="0.8">
<rect x="701.1" y="3.6" width="14.7" height="8.4" rx="1.8"/>
<rect x="701.1" y="21.4" width="14.7" height="8.4" rx="1.8"/>
</g>
<rect x="708.9" y="5.0" width="5.6" height="5.6" rx="0.7" fill="#000"/>
<rect x="708.9" y="22.8" width="5.6" height="5.6" rx="0.7" fill="#000"/>
</svg>
<div id="txt" style="position:absolute;left:0;top:0;width:768px;height:512px;will-change:transform;">
<div class="title">Material Comp</div>
<div class="store">Store</div>
<div class="tb" style="top:1.2px">996.1Hz</div>
<div class="tb" style="top:18.5px">0.00dB</div>
<div class="lab" style="left:661px;top:3.25px;font-size:7.3px">THD</div>
<div class="lab" style="left:661px;top:21.0px">Single</div>
<div class="lab" style="left:715.3px;top:3.25px">IMD</div>
<div class="lab" style="left:714.8px;top:21.0px;font-size:7.1px">Sweep</div>
<div class="info"><div style="top:2.8px">THD (SW) : -28.0 dB</div><div style="top:18.3px">THD+N (SW): -21.2 dB</div></div>
<div class="xl" style="left:14.9px">20 Hz</div><div class="xl" style="left:104.6px">50 Hz</div><div class="xl" style="left:172.5px">100 Hz</div><div class="xl" style="left:240.3px">200 Hz</div><div class="xl" style="left:330.0px">500 Hz</div><div class="xl" style="left:397.9px">1000 Hz</div><div class="xl" style="left:465.7px">2000 Hz</div><div class="xl" style="left:555.4px">5000 Hz</div><div class="xl" style="left:623.3px">10000 Hz</div><div class="xl" style="left:691.1px">20000 Hz</div><div class="yl" style="top:29.7px">0.0 dB</div><div class="yl" style="top:86.7px">-25.0 dB</div><div class="yl" style="top:143.7px">-50.0 dB</div><div class="yl" style="top:200.7px">-75.0 dB</div><div class="yl" style="top:257.7px">-100.0 dB</div><div class="yl" style="top:314.7px">-125.0 dB</div><div class="yl" style="top:371.7px">-150.0 dB</div><div class="yl" style="top:428.7px">-175.0 dB</div><div class="yl" style="top:485.7px">-200.0 dB</div>
</div>
</body></html>
